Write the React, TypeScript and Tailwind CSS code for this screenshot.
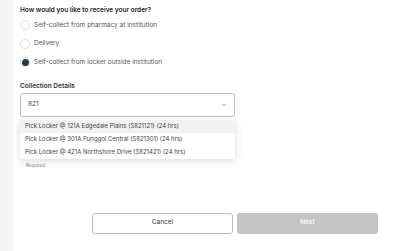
import { ChevronDown } from "lucide-react"

export default function App() {
  const options = [
    { label: "Self-collect from pharmacy at institution", selected: false },
    { label: "Delivery", selected: false },
    { label: "Self-collect from locker outside institution", selected: true },
  ]

  const lockers = [
    "Pick Locker @ 121A Edgedale Plains (S821121) (24 hrs)",
    "Pick Locker @ 301A Punggol Central (S821301) (24 hrs)",
    "Pick Locker @ 421A Northshore Drive (S821421) (24 hrs)",
  ]

  return (
    <div className="flex h-[251px] w-[397px] overflow-hidden bg-white font-['Inter',sans-serif]">
      <div className="w-[13px] shrink-0 bg-[#f6f5f3]" />

      <div className="flex flex-1 flex-col pl-[7px] pr-[19px] pt-[6px]">
        <h2 className="text-[6.5px] font-semibold leading-[9px] text-[#222]">
          How would you like to receive your order?
        </h2>

        <div className="mt-[1px] flex flex-col">
          {options.map((option, index) => (
            <label key={index} className="flex h-[18.5px] items-center gap-[4px]">
              <span className="flex h-[10px] w-[10px] items-center justify-center rounded-full border border-[#dcdcdc] bg-white">
                {option.selected && <span className="h-[7px] w-[7px] rounded-full bg-[#1f3a52]" />}
              </span>
              <span className="text-[6.5px] leading-[9px] text-[#555]">{option.label}</span>
            </label>
          ))}
        </div>

        <h3 className="mt-[10px] text-[6.5px] font-semibold leading-[9px] text-[#333]">Collection Details</h3>

        <div className="relative mt-[2px] w-[215px]">
          <div className="flex h-[24px] items-center justify-between rounded-[3px] border border-[#b9c0c4] pl-[7px] pr-[6px]">
            <span className="text-[6.5px] text-[#444]">821</span>
            <ChevronDown className="h-[8px] w-[8px] text-[#777]" strokeWidth={2} />
          </div>

          <ul className="absolute left-0 top-[27px] z-10 w-[215px] bg-white shadow-[0_2px_8px_rgba(0,0,0,0.15)]">
            {lockers.map((locker, index) => (
              <li
                key={index}
                className={`flex h-[13px] items-center px-[5px] text-[6px] leading-[8px] text-[#444] ${index === 0 ? "bg-[#f2f2f2]" : ""}`}
              >
                {locker}
              </li>
            ))}
          </ul>

          <p className="ml-[6px] mt-[46px] text-[4.5px] leading-[6px] text-[#888]">Required</p>
        </div>

        <div className="mt-[44px] flex justify-end gap-[4px]">
          <button className="h-[21px] w-[141px] rounded-[3px] border border-[#b9c0c4] bg-white text-[6.5px] text-[#333]">
            Cancel
          </button>
          <button className="h-[21px] w-[141px] rounded-[3px] bg-[#c4c4c4] text-[6.5px] font-medium text-white">
            Next
          </button>
        </div>
      </div>
    </div>
  )
}
